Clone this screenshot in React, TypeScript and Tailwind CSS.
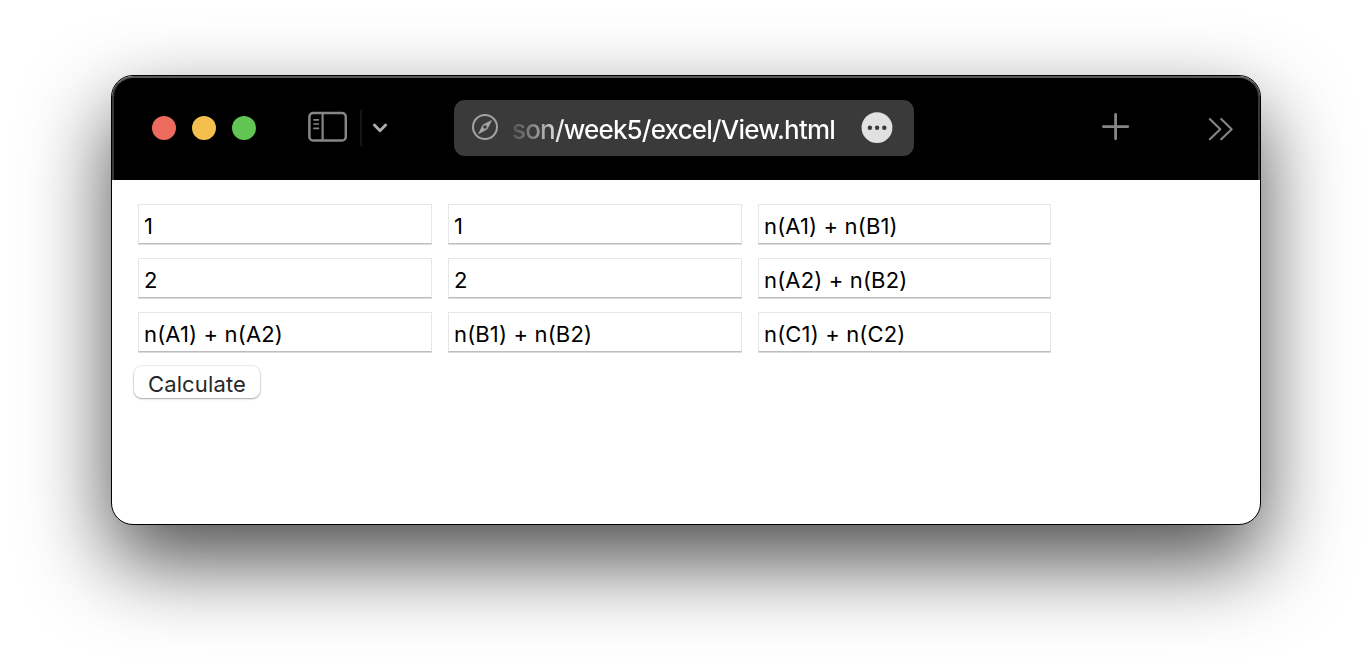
import React from "react";

const rows: string[][] = [
  ["1", "1", "n(A1) + n(B1)"],
  ["2", "2", "n(A2) + n(B2)"],
  ["n(A1) + n(A2)", "n(B1) + n(B2)", "n(C1) + n(C2)"],
];

function SidebarIcon() {
  return (
    <svg className="block shrink-0" width="40" height="32" viewBox="0 0 40 32" fill="none" stroke="#868686">
      <rect x="2.4" y="2" width="36.4" height="27.6" rx="3.8" strokeWidth="2.5" />
      <path d="M15.6 2.5V29.5" strokeWidth="2.2" />
      <path d="M7 8.8h4.4M7 13h4.4M7 17.4h4.4" strokeWidth="1.7" strokeLinecap="round" />
    </svg>
  );
}

function CompassIcon() {
  return (
    <svg className="block shrink-0" width="28" height="28" viewBox="0 0 28 28">
      <circle cx="14" cy="14" r="12" fill="none" stroke="#a3a3a3" strokeWidth="2" />
      <path
        fill="#a3a3a3"
        fillRule="evenodd"
        d="M20.6 7.2c.3.1.3.4.2.6l-4.3 8.3-.5.5-8.2 4.3c-.4.2-.7-.1-.5-.5l4.3-8.3.5-.5 8.1-4.3c.2-.1.3-.1.4-.1zM14 12.2a1.8 1.8 0 1 0 0 3.6 1.8 1.8 0 0 0 0-3.6z"
      />
    </svg>
  );
}

function Toolbar() {
  return (
    <header className="flex h-[104px] items-start rounded-t-[21px] border-x-2 border-t-2 border-x-[#383838] border-t-[#585858] bg-black">
      <div className="ml-[38px] mt-[38px] flex gap-4">
        <span className="size-6 rounded-full bg-[#ed6a5e]" />
        <span className="size-6 rounded-full bg-[#f5bf4f]" />
        <span className="size-6 rounded-full bg-[#61c554]" />
      </div>
      <div className="ml-[51px] mt-[33px] flex w-20 shrink-0">
        <SidebarIcon />
        <span className="-mt-px ml-[13px] h-9 w-0.5 shrink-0 bg-[#151515]" />
        <svg className="ml-[9px] mt-[11px] block shrink-0" width="18" height="14" viewBox="0 0 18 14" fill="none" stroke="#adadad" strokeWidth="2.9" strokeLinecap="round" strokeLinejoin="round">
          <path d="M3.4 3 9 8.8l5.6-5.8" />
        </svg>
      </div>
      <div className="ml-[67px] mt-[22px] flex h-14 w-[460px] shrink-0 items-center rounded-[11px] bg-[#3a3a3a] pl-[17px]">
        <span className="-mt-0.5">
          <CompassIcon />
        </span>
        <span className="ml-[13px] mt-1 w-[326px] whitespace-nowrap bg-[linear-gradient(90deg,#555_0px,#888_22px,#fff_54px)] bg-clip-text font-[Inter,sans-serif] text-[26px] font-medium leading-8 tracking-[-0.82px] text-transparent">
          son/week5/excel/View.html
        </span>
        <svg className="ml-[23px] block shrink-0" width="32" height="32" viewBox="0 0 32 32">
          <circle cx="16" cy="15.7" r="15.4" fill="#e1e1e1" />
          <g fill="#3a3a3a">
            <circle cx="8.9" cy="15.8" r="2.2" />
            <circle cx="16.1" cy="15.8" r="2.2" />
            <circle cx="23.3" cy="15.8" r="2.2" />
          </g>
        </svg>
      </div>
      <svg className="ml-[187px] mt-[34px] block shrink-0" width="30" height="30" viewBox="0 0 30 30" stroke="#868686" strokeWidth="2.8" strokeLinecap="round">
        <path d="M2.4 14.6h24.4M14.6 2.4v24.4" />
      </svg>
      <svg className="ml-[76px] mt-[38px] block shrink-0" width="28" height="26" viewBox="0 0 28 26" fill="none" stroke="#868686" strokeWidth="2.1" strokeLinecap="round" strokeLinejoin="round">
        <path d="M2.8 3l10.5 10.2L2.8 23.2M14.2 3l10.5 10.2-10.5 10" />
      </svg>
    </header>
  );
}

export default function App() {
  return (
    <main className="flex h-[672px] w-[1372px] items-start overflow-hidden bg-white pl-[111px] pt-[75px] font-[Inter,sans-serif]">
      <section className="h-[450px] w-[1150px] rounded-[22px] border border-black bg-white shadow-[0_36px_84px_rgba(0,0,0,0.7)]">
        <Toolbar />
        <div className="flex flex-col items-start pl-[26px] pt-6">
          <div className="flex flex-col gap-3.5">
            {rows.map((row, r) => (
              <div key={r} className="flex gap-4">
                {row.map((value, c) => (
                  <input
                    key={c}
                    defaultValue={value}
                    className="h-10 w-[294px] border border-[#e6e6e6] border-b-[#bdbdbd] bg-white pb-0 pl-[5px] pt-1 text-[22px] tracking-[0.15px] text-black shadow-[0_1px_0_#dcdcdc] outline-none last:w-[293px]"
                  />
                ))}
              </div>
            ))}
          </div>
          <button className="-ml-1 mt-3.5 flex h-8 w-[126px] items-center justify-center rounded-[8px] bg-white pt-1 text-[22px] leading-7 tracking-[0.15px] text-[#272727] shadow-[0_0_0_1px_rgba(0,0,0,0.07),0_1px_2px_rgba(0,0,0,0.3)]">
            Calculate
          </button>
        </div>
      </section>
    </main>
  );
}
